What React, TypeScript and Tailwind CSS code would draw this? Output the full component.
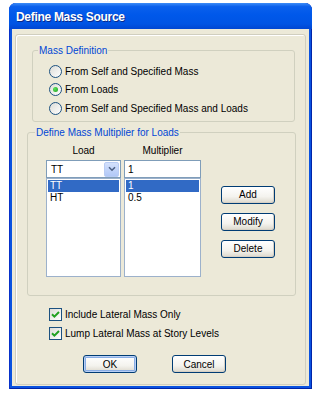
import type { ReactNode } from 'react'

function Radio({ checked, label }: { checked?: boolean; label: string }) {
  return (
    <div className="flex items-center h-[18.5px] gap-[3px]">
      <span className="w-[13px] h-[13px] rounded-full border border-[#1C5180] bg-[linear-gradient(135deg,#DCDCD7,#FFFFFF)] flex items-center justify-center">
        {checked && (
          <span className="w-[5px] h-[5px] rounded-full bg-[radial-gradient(circle_at_35%_35%,#5BE35B,#1F9E1F)]" />
        )}
      </span>
      <span>{label}</span>
    </div>
  )
}

function Check({ label }: { label: string }) {
  return (
    <div className="flex items-center h-[19px] gap-[3px]">
      <span className="w-[13px] h-[13px] border border-[#1C5180] bg-[linear-gradient(135deg,#DCDCD7,#FFFFFF)] flex items-center justify-center">
        <svg width="9" height="9" viewBox="0 0 9 9">
          <path d="M1 4.2 L3.4 6.6 L8 2" fill="none" stroke="#21A121" strokeWidth="2" />
        </svg>
      </span>
      <span>{label}</span>
    </div>
  )
}

function Button({ children, def, className }: { children: ReactNode; def?: boolean; className?: string }) {
  return (
    <div
      className={
        'w-[54px] h-[18px] flex items-center justify-center rounded-[3px] border border-[#003C74] bg-[linear-gradient(180deg,#FFFFFF_0%,#F4F3EE_60%,#DCD8CC_100%)] ' +
        (def ? 'shadow-[inset_0_0_0_1px_#B8CFF5,inset_0_0_0_2px_#89ADE4] ' : 'shadow-[inset_-1px_-1px_0_#D6D0C5] ') +
        (className ?? '')
      }
    >
      {children}
    </div>
  )
}

function Legend({ children, className }: { children: ReactNode; className: string }) {
  return <legend className={'px-[1px] leading-[13px] text-[#0046D5] ' + className}>{children}</legend>
}

export default function App() {
  return (
    <div className="w-[326px] h-[400px] bg-white pl-[9px] pt-[3px] font-['Liberation_Sans',Arial,sans-serif] text-[10px] text-black">
      <div className="w-[303px] h-[386px] flex flex-col rounded-t-[7px] bg-[#0A52E0] shadow-[inset_1px_0_0_#0831C9,inset_-1px_0_0_#0024A8,inset_0_-1px_0_#0024A8]">
        <div className="h-[26px] shrink-0 rounded-t-[7px] flex items-center pl-[7px] pt-[1px] bg-[linear-gradient(180deg,#3D8CF7_0%,#0B60EC_14%,#0058EA_45%,#0054E4_80%,#0046D2_100%)]">
          <span className="text-white font-bold text-[12px] tracking-[-0.3px] [text-shadow:1px_1px_0_#0A2A8A]">Define Mass Source</span>
        </div>
        <div className="flex-1 mx-[3px] mb-[3px] bg-[#ECE9D8] flex flex-col">
          <div className="mt-[5px] mx-[3px] h-[351px] border border-[#D0CEBF] rounded-[3px] shadow-[inset_1px_1px_0_#FFFFFF] flex flex-col">
            <fieldset className="ml-[16px] w-[263px] mt-[9px] border border-[#D0D0BF] rounded-[3px]">
              <Legend className="ml-[5px]">Mass Definition</Legend>
              <div className="pl-[16px] pt-[5px] pb-[3px]">
                <Radio label="From Self and Specified Mass" />
                <Radio checked label="From Loads" />
                <Radio label="From Self and Specified Mass and Loads" />
              </div>
            </fieldset>

            <fieldset className="ml-[11px] w-[269px] mt-[4px] border border-[#D0D0BF] rounded-[3px]">
              <Legend className="ml-[7px]">Define Mass Multiplier for Loads</Legend>
              <div className="flex pl-[18px] pt-[5px] pb-[18px]">
                <div className="w-[75px] flex flex-col">
                  <div className="h-[13px] leading-[13px] text-center mb-[3.5px]">Load</div>
                  <div className="h-[18px] border border-[#7F9DB9] bg-white flex items-center">
                    <span className="flex-1 pl-[4px]">TT</span>
                    <span className="w-[15px] h-[15px] mr-[1px] rounded-[2px] border border-[#B9CCF4] bg-[linear-gradient(180deg,#D4E1FC,#B1C8F7)] flex items-center justify-center">
                      <svg width="8" height="6" viewBox="0 0 8 6">
                        <path d="M1 1.2 L4 4.2 L7 1.2" fill="none" stroke="#4D6185" strokeWidth="1.6" />
                      </svg>
                    </span>
                  </div>
                  <div className="h-[99px] border border-[#9CB1CB] bg-white pt-[1px] px-[1px]">
                    <div className="h-[12px] leading-[12px] bg-[#316AC5] text-white pl-[2px]">TT</div>
                    <div className="h-[12px] leading-[12px] pl-[2px]">HT</div>
                  </div>
                </div>
                <div className="w-[77px] ml-[3px] flex flex-col">
                  <div className="h-[13px] leading-[13px] text-center mb-[3.5px]">Multiplier</div>
                  <div className="h-[18px] border border-[#7F9DB9] bg-white flex items-center pl-[3px]">1</div>
                  <div className="h-[99px] border border-[#9CB1CB] bg-white pt-[1px] px-[1px]">
                    <div className="h-[12px] leading-[12px] bg-[#316AC5] text-white pl-[2px]">1</div>
                    <div className="h-[12px] leading-[12px] pl-[2px]">0.5</div>
                  </div>
                </div>
                <div className="ml-[20px] pt-[42px] flex flex-col gap-[9px]">
                  <Button>Add</Button>
                  <Button>Modify</Button>
                  <Button>Delete</Button>
                </div>
              </div>
            </fieldset>

            <div className="ml-[33px] mt-[8.5px] flex flex-col">
              <Check label="Include Lateral Mass Only" />
              <Check label="Lump Lateral Mass at Story Levels" />
            </div>

            <div className="ml-[67px] mt-[12.5px] flex">
              <Button def>OK</Button>
              <Button className="ml-[35px]">Cancel</Button>
            </div>
          </div>
        </div>
      </div>
    </div>
  )
}
